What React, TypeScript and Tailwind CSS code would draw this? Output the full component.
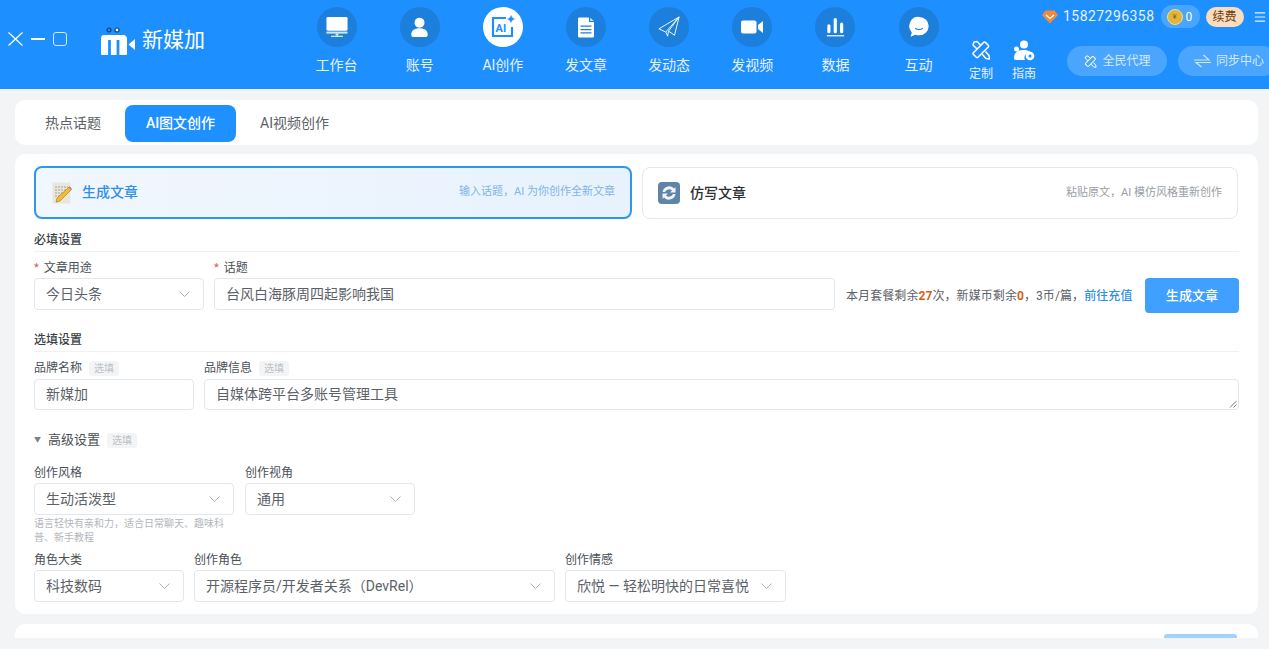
import type { ReactNode } from 'react'
import { Menu } from 'lucide-react'

// Iconos de la cabecera: trazos blancos dentro del círculo azul oscuro
function IconDesk() {
  return (
    <svg width="24" height="22" viewBox="0 0 24 24" fill="none">
      <rect x="0.500" y="1" width="23" height="15" rx="1.500" fill="#fff" />
      <rect x="0.500" y="17" width="23" height="2.200" fill="#cfe6ff" />
      <rect x="10.500" y="19" width="3" height="2.500" fill="#cfe6ff" />
      <rect x="5.500" y="21.500" width="13" height="1.400" fill="#cfe6ff" />
    </svg>
  )
}

function IconUser() {
  return (
    <svg width="19" height="21" viewBox="0 0 22 24" fill="#fff">
      <circle cx="11" cy="6.500" r="5.800" />
      <path d="M1.500 20c0-4.500 4-7 9.500-7s9.500 2.500 9.500 7c0 2-1 3-3 3h-13c-2 0-3-1-3-3z" />
    </svg>
  )
}

function IconAi() {
  return (
    <svg width="26" height="26" viewBox="0 0 26 26" fill="none">
      <path d="M16 4H3v18h19v-9" stroke="#1e8fff" strokeWidth="2.200" />
      <path d="M21 0.500c.5 2.800 1.700 4 4.500 4.500-2.800.5-4 1.700-4.500 4.500-.5-2.800-1.700-4-4.500-4.500 2.800-.5 4-1.700 4.500-4.500z" fill="#1e8fff" />
      <text x="5.500" y="18" fontSize="11" fontWeight="700" fill="#1e8fff" fontFamily="Roboto, sans-serif">AI</text>
    </svg>
  )
}

function IconDoc() {
  return (
    <svg width="18" height="21" viewBox="0 0 20 25" fill="none">
      <path d="M2 0.500h11.500v5.500H19.500V23a1.500 1.500 0 0 1-1.500 1.500H2A1.500 1.500 0 0 1 .5 23V2A1.500 1.500 0 0 1 2 .5z" fill="#fff" />
      <path d="M15 0.800l4.300 4h-4.300z" fill="#cfe6ff" />
      <path d="M3.500 11h13M3.500 15h13M3.500 19h13" stroke="#1c7fdc" strokeWidth="1.500" />
    </svg>
  )
}

function IconSend() {
  return (
    <svg width="24" height="22" viewBox="0 0 24 24" fill="none" stroke="#fff" strokeWidth="1" strokeLinejoin="round">
      <path d="M23 1L1 14l7.500 3.500L23 1z" />
      <path d="M23 1l-5 20-6.500-4.500L23 1z" />
      <path d="M8.500 17.500L10.500 22l1-5.500" />
    </svg>
  )
}

function IconVideo() {
  return (
    <svg width="22" height="14" viewBox="0 0 22 14" fill="#fff">
      <rect x="0" y="0.500" width="15.500" height="13" rx="2" />
      <path d="M17 5l5-4v12l-5-4z" />
    </svg>
  )
}

function IconBars() {
  return (
    <svg width="19" height="20" viewBox="0 0 20 22" fill="none">
      <rect x="1" y="8" width="3.500" height="10" rx="1.700" fill="#fff" />
      <rect x="8" y="1" width="3.500" height="17" rx="1.700" fill="#fff" />
      <rect x="15" y="6" width="3.500" height="12" rx="1.700" fill="#fff" />
      <rect x="0.500" y="20" width="19" height="1.300" fill="#fff" />
    </svg>
  )
}

function IconChat() {
  return (
    <svg width="22" height="22" viewBox="0 0 24 25" fill="none">
      <path d="M12 1a11 10.500 0 0 1 0 21c-1.500 0-3-.3-4.300-.8L2.500 23.500l1.300-4.800A10.500 10.500 0 0 1 12 1z" fill="#fff" />
      <path d="M8 14c2 1.800 6 1.800 8 0" stroke="#1c7fdc" strokeWidth="1.300" strokeLinecap="round" />
    </svg>
  )
}

function Logo() {
  return (
    <svg width="36" height="28" viewBox="0 0 36 28" fill="none">
      <circle cx="9" cy="3" r="2" fill="#1e8fff" stroke="#0f3d78" strokeWidth="1.200" />
      <circle cx="17" cy="3" r="2" fill="#fff" stroke="#0f3d78" strokeWidth="1.200" />
      <path d="M1 11c0-2 1-3 3-3h19c3 0 4 2 4 4v15c0 .5-.5 1-1 1H2c-.5 0-1-.5-1-1z" fill="#fff" />
      <path d="M9.500 13v15M18 13v15" stroke="#1e8fff" strokeWidth="2.800" />
      <path d="M28.500 17.500l6.500-5.500v11z" fill="#fff" />
    </svg>
  )
}

// Regla y lápiz cruzados
function IconTools({ size = 20 }: { size?: number }) {
  return (
    <svg width={size} height={size} viewBox="0 0 20 20" fill="none" stroke="#fff" strokeWidth="1.500" strokeLinejoin="round">
      <rect x="1.500" y="6.500" width="17" height="6.500" rx="1.200" transform="rotate(-45 10 10)" />
      <path d="M6 9L2 5l1-3 3-.5 4 4M11 14l4 4.500 3.500.5-.5-3.500-3.500-4" />
    </svg>
  )
}

function IconGuide() {
  return (
    <svg width="22" height="22" viewBox="0 0 22 22" fill="#fff">
      <circle cx="11" cy="4.500" r="4" />
      <circle cx="3.500" cy="9" r="2.500" />
      <path d="M1 18c0-5 3-8 9-8s8 2 8 3a5 5 0 0 0-6 7H3c-1.500 0-2-1-2-2z" />
      <circle cx="17" cy="16" r="4.300" />
      <circle cx="17" cy="16" r="1.500" fill="#1e8fff" />
    </svg>
  )
}

function IconSync() {
  return (
    <svg width="19" height="14" viewBox="0 0 19 14" fill="none" stroke="#cfe6ff" strokeWidth="1.200">
      <path d="M1 6h15L10.500 1" />
      <path d="M18 8.500H3l5.500 4.500" />
    </svg>
  )
}

function IconNote() {
  return (
    <svg width="20" height="22" viewBox="0 0 20 22" fill="none">
      <rect x="0.500" y="0.500" width="18" height="21" fill="#e9e6dc" />
      <path d="M3 5h13M3 8h13M3 11h9M3 14h6" stroke="#9a9a96" strokeWidth="0.900" strokeDasharray="2 1" />
      <path d="M17 5l2.500 2.500L8 19l-4 1.200L5 16z" fill="#f2bd2e" stroke="#8a6414" strokeWidth="0.500" />
      <path d="M16.500 5.500l1-1.200 2.200 2.200-1 1.200z" fill="#d8657c" />
    </svg>
  )
}

function IconRewrite() {
  return (
    <svg width="22" height="22" viewBox="0 0 22 22" fill="none">
      <rect x="0" y="0" width="22" height="22" rx="4" fill="#5f84a6" />
      <path d="M4.500 10a6.700 6.700 0 0 1 11.500-3.500l1.500-1.500v5.500H12l2-2a4.300 4.300 0 0 0-7 1.500z" fill="#eef4f9" />
      <path d="M17.500 12A6.700 6.700 0 0 1 6 15.500L4.500 17v-5.500H10l-2 2a4.300 4.300 0 0 0 7-1.500z" fill="#eef4f9" />
    </svg>
  )
}

function Chevron() {
  return (
    <svg width="11" height="6" viewBox="0 0 11 6" fill="none" stroke="#a3a8ae" strokeWidth="0.900" className="shrink-0">
      <path d="M0.500 0.500l5 5 5-5" />
    </svg>
  )
}

const NAV = [
  { label: '工作台', icon: <IconDesk /> },
  { label: '账号', icon: <IconUser /> },
  { label: 'AI创作', icon: <IconAi />, active: true },
  { label: '发文章', icon: <IconDoc /> },
  { label: '发动态', icon: <IconSend /> },
  { label: '发视频', icon: <IconVideo /> },
  { label: '数据', icon: <IconBars /> },
  { label: '互动', icon: <IconChat /> },
]

function Header() {
  return (
    <header className="flex h-[89px] shrink-0 overflow-hidden bg-[#1e8fff] text-white">
      {/* Controles de ventana */}
      <div className="flex w-[100px] shrink-0 items-center pb-[11px] pl-[8px]">
        <svg width="15" height="14" viewBox="0 0 15 14" stroke="#fff" strokeWidth="1.200"><path d="M0.500 0.500l14 13M14.500 0.500l-14 13" /></svg>
        <span className="ml-[8px] h-[2px] w-[14px] bg-white" />
        <span className="ml-[8px] h-[14px] w-[14px] rounded-[3px] border border-[#d6eaff]" />
      </div>
      <div className="flex w-[195px] shrink-0 items-center pb-[7px]">
        <Logo />
        <span className="ml-[6px] text-[21px]">新媒加</span>
      </div>
      <nav className="flex w-[664px] shrink-0 pt-[7px]">
        {NAV.map(item => (
          <div key={item.label} className="flex w-[83.15px] shrink-0 flex-col items-center">
            <div className={`flex h-[40px] w-[40px] items-center justify-center rounded-full ${item.active ? 'bg-white' : 'bg-[#1c7fdc]'}`}>
              {item.icon}
            </div>
            <span className="mt-[8px] text-[14px] leading-[20px] text-[#e6f2ff]">{item.label}</span>
          </div>
        ))}
      </nav>
      <div className="flex min-w-0 flex-1 flex-col">
        <div className="flex h-[33px] items-center whitespace-nowrap pl-[83px]">
          <svg width="16" height="14" viewBox="0 0 16 14"><path d="M3.500 0.500h9L16 5l-8 8.500L0 5z" fill="#f08a3c" /><path d="M4 5l4 3.500L12 5" stroke="#fff" strokeWidth="1.200" fill="none" /></svg>
          <span className="ml-[5px] text-[14px] tracking-[0.45px] text-[#e6f2ff]">15827296358</span>
          <div className="ml-[6px] flex h-[23px] w-[39px] shrink-0 items-center rounded-full bg-[#4aa5ff] pl-[6px]">
            <span className="flex h-[16px] w-[16px] items-center justify-center rounded-full border border-[#f4df8e] bg-[#e0b53e] text-[8px] leading-none text-[#8a5e0c]">¥</span>
            <span className="ml-[3px] text-[12px]">0</span>
          </div>
          <div className="ml-[6px] flex h-[20px] w-[38px] shrink-0 items-center justify-center rounded-full bg-[#fbdcbc] text-[12px] text-[#6b3d12]">续费</div>
          <Menu size={14} className="ml-[9px] shrink-0 text-[#e6f2ff]" />
        </div>
        <div className="flex items-start pt-[7px] whitespace-nowrap">
          <div className="ml-[10px] flex w-[26px] flex-col items-center">
            <IconTools />
            <span className="mt-[7px] text-[12px] leading-[14px] text-[#e6f2ff]">定制</span>
          </div>
          <div className="ml-[19px] flex w-[26px] flex-col items-center">
            <IconGuide />
            <span className="mt-[5px] text-[12px] leading-[14px] text-[#e6f2ff]">指南</span>
          </div>
          <div className="ml-[31px] mt-[6px] flex h-[30px] w-[100px] shrink-0 items-center justify-center rounded-full bg-[#4aa5ff] text-[12px] text-[#d6eaff]">
            <IconTools size={13} />
            <span className="ml-[6px]">全民代理</span>
          </div>
          <div className="ml-[11px] mt-[6px] flex h-[30px] w-[100px] shrink-0 items-center rounded-full bg-[#4aa5ff] pl-[15px] text-[12px] text-[#d6eaff]">
            <IconSync />
            <span className="ml-[4px]">同步中心</span>
          </div>
        </div>
      </div>
    </header>
  )
}

function Label({ children, required, optional }: { children: ReactNode; required?: boolean; optional?: boolean }) {
  return (
    <div className="flex h-[16px] items-center text-[12px] leading-[16px] text-[#4a4f57]">
      {required && <span className="mr-[5px] text-[11px] text-[#e0505a]">*</span>}
      {children}
      {optional && <Optional />}
    </div>
  )
}

function Optional() {
  return <span className="ml-[7px] rounded-[3px] bg-[#f3f4f5] px-[5px] text-[10px] leading-[15px] text-[#bcc0c5]">选填</span>
}

function Select({ value, className }: { value: string; className: string }) {
  return (
    <div className={`flex h-[32px] items-center justify-between rounded-[4px] border border-[#e3e6ea] bg-white pl-[11px] pr-[13px] text-[14px] text-[#5c6168] ${className}`}>
      <span className="whitespace-nowrap">{value}</span>
      <Chevron />
    </div>
  )
}

function Field({ value, className }: { value: string; className: string }) {
  return (
    <div className={`flex items-center rounded-[4px] border border-[#e3e6ea] bg-white pl-[11px] text-[14px] text-[#5c6168] ${className}`}>
      {value}
    </div>
  )
}

function SectionTitle({ children }: { children: ReactNode }) {
  return (
    <div className="border-b border-[#f0f1f3] pb-[3px] text-[12px] font-medium leading-[16px] text-[#3a3f46]">{children}</div>
  )
}

export default function App() {
  return (
    <div className="flex h-[649px] w-[1269px] flex-col overflow-hidden bg-[#f3f4f5] font-['Roboto','Noto_Sans_CJK_SC',sans-serif]">
      <Header />
      <main className="flex flex-col pl-[15px] pr-[11px] pt-[11px]">
        {/* Pestañas */}
        <div className="flex h-[45px] shrink-0 items-center rounded-[10px] bg-white pl-[30px] pt-[1px] text-[14px] text-[#5c6168]">
          <span>热点话题</span>
          <span className="ml-[24px] flex h-[37px] w-[111px] items-center justify-center rounded-[8px] bg-[#1e90ff] font-medium text-white">AI图文创作</span>
          <span className="ml-[24px]">AI视频创作</span>
        </div>

        <section className="mt-[9px] h-[460px] shrink-0 rounded-[10px] bg-white pl-[19px] pr-[19px] pt-[12px]">
          {/* Modos de generación */}
          <div className="flex gap-[10px]">
            <div className="flex h-[53px] w-[598px] items-center rounded-[8px] border-2 border-[#2f96ee] bg-linear-to-r from-[#f1f7fe] to-[#e7f2fd] pl-[16px] pr-[15px]">
              <IconNote />
              <span className="ml-[10px] text-[14px] font-medium text-[#2f8fe6]">生成文章</span>
              <span className="ml-auto text-[11px] text-[#7fb5e8]">输入话题，AI 为你创作全新文章</span>
            </div>
            <div className="mt-[1px] flex h-[52px] w-[596px] items-center rounded-[8px] border border-[#e3e8ee] bg-white pl-[15px] pr-[15px]">
              <IconRewrite />
              <span className="ml-[10px] text-[14px] font-medium text-[#2b2f36]">仿写文章</span>
              <span className="ml-auto text-[11px] text-[#9a9ea4]">粘贴原文，AI 模仿风格重新创作</span>
            </div>
          </div>

          <div className="mt-[13px]"><SectionTitle>必填设置</SectionTitle></div>
          <div className="mt-[8px] flex items-start">
            <div className="w-[170px] shrink-0">
              <Label required>文章用途</Label>
              <Select value="今日头条" className="mt-[2px] w-[170px]" />
            </div>
            <div className="ml-[10px] w-[621px] shrink-0">
              <Label required>话题</Label>
              <Field value="台风白海豚周四起影响我国" className="mt-[2px] h-[32px]" />
            </div>
            <div className="ml-[11px] mt-[18px] flex h-[35px] flex-1 items-center whitespace-nowrap text-[12px] tracking-[0.08px] text-[#5c6168]">
              <span>本月套餐剩余<b className="text-[#d2601a]">27</b>次，新媒币剩余<b className="text-[#d2601a]">0</b>，3币/篇，</span>
              <span className="font-medium text-[#2f8fe6]">前往充值</span>
              <span className="ml-auto flex h-[35px] w-[94px] items-center justify-center rounded-[4px] bg-[#40a0ff] text-[13px] font-medium text-white">生成文章</span>
            </div>
          </div>

          <div className="mt-[19px]"><SectionTitle>选填设置</SectionTitle></div>
          <div className="mt-[8px] flex">
            <div className="w-[160px] shrink-0">
              <Label optional>品牌名称</Label>
              <Field value="新媒加" className="mt-[3px] h-[31px]" />
            </div>
            <div className="ml-[10px] flex-1">
              <Label optional>品牌信息</Label>
              <div className="relative mt-[3px]">
                <Field value="自媒体跨平台多账号管理工具" className="h-[31px]" />
                {/* Asa de redimensionar del textarea */}
                <svg className="absolute bottom-[2px] right-[2px]" width="8" height="8" viewBox="0 0 8 8" stroke="#555" strokeWidth="0.800"><path d="M1 7.500L7.500 1M4.500 7.500l3-3" /></svg>
              </div>
            </div>
          </div>

          <div className="mt-[22px] flex h-[16px] items-center text-[12px] text-[#4a4f57]">
            <span className="mr-[7px] text-[7px] text-[#7b8087]">▼</span>
            <span className="text-[13px]">高级设置</span>
            <Optional />
          </div>

          <div className="mt-[17px] flex">
            <div className="w-[200px] shrink-0">
              <Label>创作风格</Label>
              <Select value="生动活泼型" className="mt-[2px] w-[200px]" />
              <p className="mt-[2px] w-[200px] text-[10px] leading-[14px] text-[#b3b7bc]">语言轻快有亲和力，适合日常聊天、趣味科普、新手教程</p>
            </div>
            <div className="ml-[11px] w-[170px] shrink-0">
              <Label>创作视角</Label>
              <Select value="通用" className="mt-[2px] w-[170px]" />
            </div>
          </div>

          <div className="mt-[7px] flex">
            <div className="w-[150px] shrink-0">
              <Label>角色大类</Label>
              <Select value="科技数码" className="mt-[2px] w-[150px]" />
            </div>
            <div className="ml-[10px] w-[361px] shrink-0">
              <Label>创作角色</Label>
              <Select value="开源程序员/开发者关系（DevRel）" className="mt-[2px] w-[361px]" />
            </div>
            <div className="ml-[10px] w-[221px] shrink-0">
              <Label>创作情感</Label>
              <Select value="欣悦 — 轻松明快的日常喜悦" className="mt-[2px] w-[221px]" />
            </div>
          </div>
        </section>

        {/* Siguiente tarjeta, cortada por el borde de la ventana */}
        <div className="mt-[10px] flex h-[14px] shrink-0 justify-end overflow-hidden rounded-t-[10px] bg-white pr-[21px] pt-[10px]">
          <span className="h-[8px] w-[73px] rounded-t-[3px] bg-[#a3d2ff]" />
        </div>
      </main>
    </div>
  )
}
